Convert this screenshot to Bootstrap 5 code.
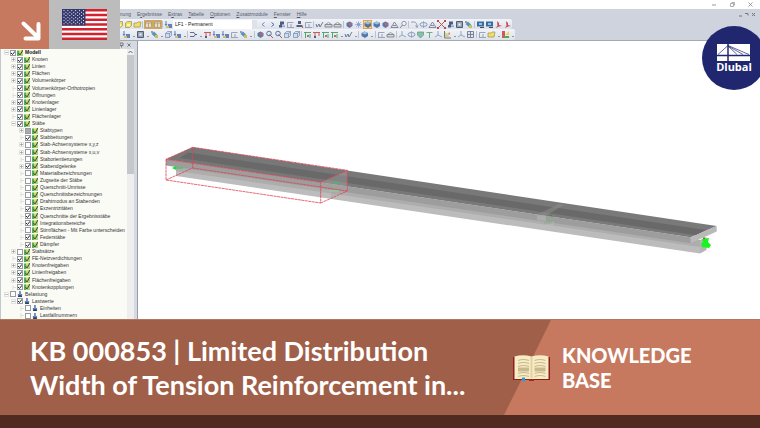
<!DOCTYPE html>
<html lang="en">
<head>
<meta charset="utf-8">
<meta name="viewport" content="width=device-width, initial-scale=1">
<title>KB 000853 | Dlubal Knowledge Base</title>
<link href="https://cdn.jsdelivr.net/npm/bootstrap@5.3.0/dist/css/bootstrap.min.css" rel="stylesheet">
<style>
body { font-family: "Liberation Sans", Arial, sans-serif; background: #fff; }
.app-ui { font-family: "Liberation Sans", Arial, sans-serif; font-size: 5px; line-height: 7px; color: #333; }
.win-bar { height: 9px; gap: 11px; padding-right: 6px; }
.win-btn { width: 7px; height: 7px; line-height: 0; }
.chrome { background: #ced3dd; border-bottom: 1px solid #a6a9ae; }
.menu-line { height: 10px; padding-left: 104px; gap: 6px; }
.menu-line a { color: #555b68; text-decoration: none; }
.tool-line { height: 10px; }
.tools-a { padding-left: 115px; }
.tools-b { padding-left: 122px; height: 11px; }
.tool-strip { background: linear-gradient(#f1f3f8, #dde2eb); border-radius: 0 2px 2px 0; }
.tool { width: 9px; height: 9px; flex: none; line-height: 0; }
.tool svg { width: 9px; height: 9px; opacity: .85; }
.tool.lit { background: #fbd48c; box-shadow: inset 0 0 0 1px #d5a75a; }
.drop { width: 5px; height: 9px; flex: none; line-height: 0; }
.drop::after { content: ""; display: inline-block; border: 1px solid transparent; border-top-color: #444; margin-top: 4px; }
.gap-line { width: 1px; height: 7px; background: #bcc2ce; margin-right: 1px; flex: none; }
.gap-line.wide { margin: 0 1px; }
.case-box { width: 84px; height: 9px; margin-right: 2px; appearance: none; background: #fff linear-gradient(#dde2eb, #dde2eb) right / 5px 100% no-repeat; color: #222; font-size: 5px; line-height: 9px; padding: 0 2px; border: 0; }
.side { width: 137px; flex: none; background: #d5d9e2; }
.side-head { height: 8px; padding-right: 5px; gap: 3px; color: #555; }
.tree { background: #fbfbf6; padding-left: 3px; border-left: 1px solid #c3c7d0; }
.node { min-height: 0; gap: 1px; white-space: nowrap; }
.node label { margin-left: 1px; color: #333; }
.node input { appearance: none; width: 6px; height: 6px; margin: 0; flex: none; border: 1px solid #959ba4; background: #fff; }
.node input:checked { background: #fff url("data:image/svg+xml,%3Csvg xmlns='http://www.w3.org/2000/svg' viewBox='0 0 4 4'%3E%3Cpath d='M0 2L1.5 3.5L4 .3' fill='none' stroke='%23222'/%3E%3C/svg%3E") center / contain no-repeat; }
.node .mixed { background: #aaa; }
.fold { width: 5px; flex: none; line-height: 0; }
.fold svg { width: 5px; height: 5px; display: block; }
.node-icon { width: 6px; height: 6px; flex: none; }
.lvl-1 { padding-left: 7px; }
.lvl-2 { padding-left: 15px; }
.root label { font-weight: 700; color: #111; }
.rail { width: 7px; background: #eeeeef; margin-right: 3px; }
.rail-thumb { background: #c6c7ca; height: 119px; }
.view { border-left: 1px solid #9a9da3; min-width: 0; }
.view svg { width: 100%; height: auto; display: block; }
.corner { z-index: 3; height: 49px; }
.corner-arrow { width: 49px; background: #c6795e; }
.corner-flag { width: 71px; background: #bcbcbc; }
.brand { z-index: 4; top: 26px; right: -6px; width: 64px; height: 64px; background: #20276f; font-family: "Open Sans", sans-serif; font-size: 11px; line-height: 12px; }
.banner { background: #9f5f49; border-top: 1px solid #b27661; height: 96px; }
.banner h1 { font-family: Lato, sans-serif; font-weight: 700; font-size: 27px; line-height: 34px; padding-left: 30px; }
.topic { width: 256px; background: #c6795e; clip-path: polygon(47px 0, 100% 0, 100% 100%, 0 100%); }
.topic-inner h2 { font-family: Lato, sans-serif; font-weight: 900; font-size: 20px; line-height: 25px; }
.topic-inner { padding-left: 9px; gap: 11px; z-index: 2; margin-left: -256px; width: 256px; }
.base-strip { height: 13px; background: #522b20; }
</style>
<script src="https://cdn.jsdelivr.net/npm/bootstrap@5.3.0/dist/js/bootstrap.bundle.min.js"></script>
</head>
<body class="d-flex flex-column vh-100 overflow-hidden position-relative">

<div class="corner d-flex position-absolute top-0 start-0">
  <div class="corner-arrow">
    <svg width="49" height="49" viewBox="0 0 49 49" aria-hidden="true"><path d="M23.500 23.500L37 36.500M38.500 24v14.500H25.500" fill="none" stroke="#fff" stroke-width="4" stroke-linecap="round" stroke-linejoin="round"/></svg>
  </div>
  <div class="corner-flag">
    <svg width="71" height="49" viewBox="49 0 71 49" role="img" aria-label="United States flag">
      <path fill="#fff" d="M62 9h45v31H62z"/>
      <path stroke="#d3222f" stroke-width="2.400" d="M62 10.200h45M62 14.960h45M62 19.720h45M62 24.480h45M62 29.240h45M62 34h45M62 38.760h45"/>
      <path fill="#35386d" d="M62 9h23.500v16.500H62z"/>
      <g id="stars" fill="#fff"></g>
    </svg>
  </div>
</div>

<a href="#" class="brand position-absolute rounded-circle d-flex flex-column align-items-center justify-content-center text-white fw-bold text-decoration-none">
  <svg width="34" height="17" viewBox="0 0 34 17" aria-hidden="true">
    <path fill="#fff" d="M0 0h33v17H0z"/>
    <path stroke="#20276f" fill="none" d="M0 11.500h33" stroke-width="1.500"/>
    <path stroke="#20276f" fill="none" d="M11 0v17" stroke-width="1.500"/>
    <path stroke="#20276f" fill="none" d="M1 10.500L11 1.500L32 10.500M11 2l9 8.500M11 2l15 8.500" stroke-width=".7"/>
  </svg>
  <span>Dlubal</span>
</a>

<main class="app-ui d-flex flex-column flex-fill overflow-hidden">
  <div class="win-bar d-flex justify-content-end align-items-center flex-shrink-0">
    <button class="win-btn btn p-0 border-0" aria-label="Minimize"><svg width="7" height="7"><path d="M1 4h4" stroke="#999"/></svg></button>
    <button class="win-btn btn p-0 border-0" aria-label="Restore"><svg width="7" height="7"><path d="M1.500 2.500h3v3h-3zM2.500 1.500h3v3" stroke="#999" fill="none" stroke-width=".8"/></svg></button>
    <button class="win-btn btn p-0 border-0" aria-label="Close"><svg width="7" height="7"><path d="M1.500 1.500l4 4m0-4l-4 4" stroke="#888" stroke-width=".8"/></svg></button>
  </div>
  <div class="chrome flex-shrink-0">
    <nav class="menu-line d-flex align-items-center">
      <a href="#">Berechnung</a><a href="#">E<u>r</u>gebnisse</a><a href="#">E<u>x</u>tras</a><a href="#"><u>T</u>abelle</a><a href="#"><u>O</u>ptionen</a><a href="#"><u>Z</u>usatzmodule</a><a href="#"><u>F</u>enster</a><a href="#"><u>H</u>ilfe</a>
      <svg class="ms-auto me-1" width="18" height="7" aria-hidden="true"><path d="M1 5h3M7 2.500h3v2M14 2l3 3m0-3l-3 3" stroke="#777" fill="none"/></svg>
    </nav>
    <div class="d-flex"><div class="tool-strip tool-line tools-a d-flex align-items-center" id="toolsA"></div></div>
    <div class="d-flex"><div class="tool-strip tool-line tools-b d-flex align-items-center" id="toolsB"></div></div>
  </div>
  <div class="d-flex flex-fill overflow-hidden">
    <aside class="side d-flex flex-column">
      <div class="side-head d-flex justify-content-end align-items-center flex-shrink-0"><svg width="14" height="6" aria-hidden="true"><path d="M2 1h3v2.500H2zM3.500 3.500v2M9.500 1.500l3 3m0-3l-3 3" fill="none" stroke="#777"/></svg></div>
      <div class="d-flex flex-fill overflow-hidden">
        <ul class="tree list-unstyled d-flex flex-column flex-fill mb-0 overflow-hidden" id="tree"></ul>
        <div class="rail flex-shrink-0">
          <svg class="d-block" width="7" height="6" aria-hidden="true"><path d="M1.500 4L3.500 2l2 2" fill="none" stroke="#666"/></svg>
          <div class="rail-thumb"></div>
        </div>
      </div>
    </aside>
    <section class="view flex-fill bg-white">
      <svg viewBox="138 41 622 278" role="img" aria-label="Structural beam model">
        <defs>
          <linearGradient id="deck" x1="0" y1="0" x2="1" y2="0"><stop offset="0" stop-color="#777"/><stop offset="1" stop-color="#7a7a7a"/></linearGradient>
        </defs>
        <path fill="#bcbcbc" d="M176 166L700 241V253.500L176 176z"/>
        <path fill="#adadad" d="M176 165L700 240V247L176 171z"/>
        <path fill="#b5b5b5" d="M700 240L706.500 237V250L700 253.500z"/>
        <path fill="#9d9d9d" d="M166 159.300L690.700 237.300V243.300L166 165.500z"/>
        <path fill="url(#deck)" d="M192.700 147.300L716.700 226L690.700 237.300L166 159.300z"/>
        <path fill="#696969" d="M188 152.500L706 230L696 235.200L180 158z"/>
        <path fill="#b9b9b9" d="M716.700 226V231.500L690.700 243.300V237.300z"/>
        <path fill="#909090" opacity=".5" d="M537 214.500L559 204L564 205L546 215.500z"/>
        <path fill="#bbb" opacity=".5" d="M537 215l9 1v5l-9-1zM546 224l8-3v5l-8 3z"/>
        <path stroke="#59bd61" stroke-width=".8" opacity=".6" d="M546 216h9M544 223h9"/>
        <path fill="#3f7a45" d="M549 216l2-1 2 1.500z"/>
        <path fill="#a5a5a5" opacity=".45" d="M320.700 182.300L347.300 170.300V191L331 197V188L320.700 189z"/>
        <path fill="none" stroke="#df4453" stroke-width=".8" stroke-dasharray="3 .5" d="M192.700 147.300L166 159.300L320.700 182.300L347.300 170.300zM166 159.300V180L320.700 203V182.300M320.700 203L347.300 191V170.300M166 180L192.700 168V147.300M192.700 168L347.300 191"/>
        <path fill="#20d83a" d="M172 168l4-2v1.500h7v1h-7v1.500zM332 183l4-1.500 3 1.500z"/>
        <path stroke="#8cd88e" d="M329 191h10"/>
        <path fill="#17f51f" d="M702 239l7-1-1 4 3 3-2 3-7-1-1-3 2-2z"/>
        <path fill="#b44" d="M703 237.500h2v1.500h-2z"/>
      </svg>
    </section>
  </div>
</main>

<footer class="flex-shrink-0 text-white">
  <div class="banner d-flex justify-content-between">
    <h1 class="mb-0 align-self-center text-nowrap">KB 000853 | Limited Distribution<br>Width of Tension Reinforcement in...</h1>
    <div class="d-flex">
      <div class="topic"></div>
      <div class="topic-inner d-flex align-items-center">
        <svg width="38" height="28" viewBox="0 0 38 28" aria-hidden="true">
          <path fill="#8e1f1c" d="M0 3h37v23H0z"/><path fill="#a62623" d="M16 25h5v2h-5z"/>
          <path fill="#f8ecc6" d="M1.500 2.500Q10 0 18.500 2.500Q27 0 35.500 2.500V25H1.500z"/>
          <path fill="#e2d2a2" d="M17.500 3h2v21h-2z"/>
          <path stroke="#c9b98d" stroke-width="1.200" fill="none" d="M5 6.500q5.500-2 11 0M5 9.500q5.500-2 11 0M5 12.500q5.500-2 11 0M5 19.500q5.500-2 11 0M5 22.500q5.500-2 11 0M21.500 6.500q5.500-2 11 0M21.500 9.500q5.500-2 11 0M21.500 12.500q5.500-2 11 0M21.500 19.500q5.500-2 11 0M21.500 22.500q5.500-2 11 0"/>
          <path fill="#c9b98d" d="M5 13.500h11v4H5zM21.500 13.500h11v4h-11z"/>
          <path fill="#1f9edb" d="M9 23.500h3v4l-1.500-1-1.500 1z"/>
        </svg>
        <h2 class="mb-0">KNOWLEDGE<br>BASE</h2>
      </div>
    </div>
  </div>
  <div class="base-strip"></div>
</footer>

<script>
const shapes = {
  box: '<path d="M1.500 3l2-1.500h4v4l-2 2h-4z" fill="#f5dc3e" stroke="#8c8532" stroke-width=".7"/><path d="M3 4h3v2H3z" fill="#fff8b0"/>',
  folder: '<path d="M1 3h3l1-1h3l-1 5H1z" fill="#f5dc4e" stroke="#8c8532" stroke-width=".7"/>',
  panel: '<path d="M1.500 1.500h6v6h-6zM1.500 3h6M4.500 3v4" fill="#e7e0cf" stroke="#8b7c62" stroke-width=".7"/>',
  load: '<path d="M2 1v4M1 4l1 1.500L3 4" stroke="#3b64b4" fill="none"/><path d="M4 4h4v4H4z" fill="#4d71ae"/><path d="M2 6h3v2H2z" fill="#d8b748"/>',
  prev: '<path d="M5.500 2.500L3 4.500l2.500 2" fill="none" stroke="#5675c5"/>',
  next: '<path d="M3.500 2.500L6 4.500l-2.500 2" fill="none" stroke="#35509e"/>',
  dark: '<path d="M3 1.500h4v3H5v3H2V5h1z" fill="#30456f"/><path d="M5 5.500h3v1.500H5z" fill="#7d99c9"/>',
  frame: '<path d="M1.500 7.500v-5h6M1 7.500h7M5 4v3" fill="none" stroke="#8590a2" stroke-width=".9"/>',
  person: '<path d="M3 1h3v3H3zM1.500 5h6v2h-6z" fill="#36486e"/><path d="M6 5l2 3" stroke="#b33"/>',
  pen: '<path d="M1 4l1 3 2-3 1 3 3-5" fill="none" stroke="#4c5c73" stroke-width=".9"/>',
  beam: '<path d="M2 4q2.500-3 5 0" stroke="#8a8f99" fill="none"/><path d="M1 4.500h7v2.500H1z" fill="#dad6c4" stroke="#5c6675" stroke-width=".8"/>',
  star: '<circle cx="4.500" cy="4.500" r="1.500" fill="#7f8bcf"/><path d="M4.500 1v7M1 4.500h7M2 2l5 5M7 2L2 7" stroke="#7d89cf" stroke-width=".6"/>',
  cube: '<path d="M1.500 3.500l2-2h4v4l-2 2h-4zM1.500 3.500h4v4m0-4l2-2" fill="#cddcf0" stroke="#6379a0" stroke-width=".7"/>',
  solid: '<path d="M1.500 3l3-1.500L8 3v3L5 8 1.500 6z" fill="#3b639e"/><path d="M1.500 3L5 4.500 8 3 4.500 1.500z" fill="#8bbce0"/>',
  redcube: '<path d="M1.500 3l3-1.500L7.500 3v3l-3 2-3-2z" fill="#41659c"/><path d="M4 3h2.500v2.500H4z" fill="#ca4a4a"/>',
  tri: '<path d="M1 7.500L4.500 2 8 7.500zM3 5.500h3" fill="none" stroke="#6c6e86" stroke-width=".9"/>',
  cross: '<path d="M1 1l7 7M8 1L1 8" stroke="#b33a3a" stroke-width="1"/><path d="M0 0h2v2H0zM7 0h2v2H7zM0 7h2v2H0zM7 7h2v2H7z" fill="#a33"/>',
  search: '<circle cx="4" cy="3.500" r="2.300" fill="#d8e9f8" stroke="#45628e"/><path d="M4.500 4.500L8 8" stroke="#b33"/>',
  lens: '<circle cx="5" cy="3.500" r="2.200" fill="#eef2f8" stroke="#6c7687" stroke-width=".8"/><path d="M3.500 5L1 8" stroke="#6c7687"/>',
  hook: '<path d="M1 2h3q3 0 3 5M5.500 5.500L7 7.500l1-2" fill="none" stroke="#7a8698" stroke-width=".9"/>',
  oval: '<ellipse cx="4.500" cy="4.500" rx="3.500" ry="2" fill="none" stroke="#6d87ad" stroke-width=".9"/><path d="M4.500 1v7" stroke="#7990b1" stroke-width=".7"/>',
  monitor: '<path d="M1 1.500h7v5H1z" fill="#24548e"/><path d="M4 7.500h4" stroke="#333"/><path d="M3 3h3v2H3z" fill="#74c4e9"/>',
  red: '<path d="M3 1l2 2v2l3 1-3 .5L2 8l1.500-2.500z" fill="#c22d35"/>',
  paint: '<path d="M1.500 4L4 1.500l3 3L5 7z" fill="#3c86b7"/><path d="M5 5h3v3H5z" fill="#d2b33e"/><path d="M1 2h2" stroke="#335"/>',
  fork: '<path d="M1 2.500h6L4 5l3 2.500" fill="none" stroke="#69789b" stroke-width=".9"/>',
  window: '<path d="M1.500 1.500h6v6h-6z" fill="#8b98ae" stroke="#38475e"/><path d="M3.500 3.500h2v2h-2z" fill="#f3f5f8"/>',
  result: '<path d="M1 2.500h7M3 2.500V8M7 2.500V6" fill="none" stroke="#c04545" stroke-width="1"/><path d="M2 6h2v2H2z" fill="#446"/>',
  greenr: '<path d="M1 2.500h7M2.500 2.500V8M7 4v4" fill="none" stroke="#379b56" stroke-width="1"/><path d="M4 5h2v2H4z" fill="#b55"/>',
  axis: '<path d="M4 1v4l4 2M4 5L1 7" fill="none" stroke="#7a93b3" stroke-width=".9"/>',
  green: '<path d="M1.500 2h6v3l-3 3-3-3z" fill="#70bf95" stroke="#547b80" stroke-width=".7"/>',
  post: '<path d="M4.500 2v6M1.500 2.500h6" fill="none" stroke="#5f9f75" stroke-width="1"/>',
  grid: '<path d="M1.500 1.500h6v6h-6zM1.500 4.500h6M4.500 1.500v6" fill="#dce3ef" stroke="#59667c" stroke-width=".9"/>',
  palette: '<path d="M1 1h3v7H1z" fill="#d23c3c"/><path d="M1 5l3 3h4V6H4z" fill="#3c9c48"/><path d="M4 5l4-4v4z" fill="#eed13a"/>',
  chart: '<path d="M1.500 1v7H8" stroke="#667" fill="none"/><path d="M2 2l5 5H2z" fill="#c9d064"/><path d="M4 4l3-2v3z" fill="#c98a6a"/>',
  member: '<path d="M1 2.500h4q2.500 2 0 4H1" fill="none" stroke="#354865" stroke-width=".9"/><path d="M6 4.500h2" stroke="#354865"/>'
};
// "-" and "=" are narrow and wide separators, "v" opens a menu, "!" marks a pressed button
const rowA = 'box box folder - !panel !panel - load SELECT prev next dark frame person frame - pen beam beam = redcube star !solid solid redcube tri lens - hook oval tri cross dark window paint = monitor monitor red red';
const rowB = 'load v window v paint v cube load v - member v result load load frame paint v = redcube search search cube cube - greenr result greenr greenr v pen v - solid v = frame beam = axis oval green post axis chart v axis grid = frame folder v palette v';
function fill(id, spec) {
  document.getElementById(id).innerHTML = spec.split(' ').map(s => {
    if (s === '-') return '<span class="gap-line"></span>';
    if (s === '=') return '<span class="gap-line wide"></span>';
    if (s === 'v') return '<button class="drop btn p-0 border-0" aria-label="More"></button>';
    if (s === 'SELECT') return '<select class="case-box" aria-label="Load case"><option>LF1 - Permanent</option></select>';
    const lit = s[0] === '!', k = s.replace('!', '');
    return `<button class="tool btn p-0 border-0 rounded-0${lit ? ' lit' : ''}" aria-label="${k}"><svg viewBox="0 0 9 9">${shapes[k]}</svg></button>`;
  }).join('');
}
fill('toolsA', rowA);
fill('toolsB', rowB);

// level, fold sign, state (1 ticked, 0 empty, 2 mixed), label
const nodes = [
 [0,'-',1,'Modell'],[1,'+',1,'Knoten'],[1,'+',1,'Linien'],[1,'+',1,'Flächen'],[1,'+',1,'Volumenkörper'],
 [1,'',1,'Volumenkörper-Orthotropien'],[1,'',1,'Öffnungen'],[1,'+',1,'Knotenlager'],[1,'+',1,'Linienlager'],
 [1,'',1,'Flächenlager'],[1,'-',1,'Stäbe'],[2,'+',2,'Stabtypen'],[2,'',1,'Stabbettungen'],
 [2,'+',0,'Stab-Achsensysteme x,y,z'],[2,'+',0,'Stab-Achsensysteme x,u,v'],[2,'',0,'Staborientierungen'],
 [2,'+',1,'Stabendgelenke'],[2,'',0,'Materialbezeichnungen'],[2,'',0,'Zugseite der Stäbe'],
 [2,'',0,'Querschnitt-Umrisse'],[2,'',0,'Querschnittsbezeichnungen'],[2,'',0,'Drahtmodus an Stabenden'],
 [2,'',1,'Exzentrizitäten'],[2,'',1,'Querschnitte der Ergebnisstäbe'],[2,'',1,'Integrationsbereiche'],
 [2,'',0,'Stirnflächen - Mit Farbe unterscheiden'],[2,'',1,'Federstäbe'],[2,'',1,'Dämpfer'],
 [1,'+',0,'Stabsätze'],[1,'',1,'FE-Netzverdichtungen'],[1,'+',1,'Knotenfreigaben'],[1,'+',1,'Linienfreigaben'],
 [1,'+',1,'Flächenfreigaben'],[1,'',1,'Knotenkopplungen'],[0,'-',0,'Belastung'],[1,'-',1,'Lastwerte'],
 [2,'',0,'Einheiten'],[2,'',0,'Lastfallnummern']
];
const modelIcon = '<svg class="node-icon" viewBox="0 0 6 6"><path d="M0 0h6v6H0z" fill="#a5d58a"/><path d="M0 1h2v5H0z" fill="#4fae57"/><path d="M1.500 3l1.500 2 3-5" stroke="#5d4a20" fill="none"/><path d="M2 0h2v1.500H2z" fill="#f3e65b"/></svg>';
const loadIcon = '<svg class="node-icon" viewBox="0 0 6 6"><path d="M3 0v5M1 3.500L3 5.500 5 3.500" stroke="#2b4e94" stroke-width="1.200" fill="none"/><path d="M1 5.500h4" stroke="#345"/></svg>';
const sign = { '+': 'M1 2.500h3M2.500 1v3', '-': 'M1 2.500h3' };
document.getElementById('tree').innerHTML = nodes.map(([l, f, c, t], i) => {
  const fold = f ? `<button class="fold btn p-0 border-0" aria-label="Toggle"><svg viewBox="0 0 5 5"><path d="M.5.5h4v4h-4z" fill="#fff" stroke="#ccc" stroke-width=".6"/><path d="${sign[f]}" stroke="#888" stroke-width=".6"/></svg></button>`
    : '<span class="fold"><svg viewBox="0 0 5 5"><path d="M2 0v5M2 2.500h3" stroke="#d2d2d2" stroke-width=".7"/></svg></span>';
  return `<li class="node lvl-${l} d-flex align-items-center flex-fill${i ? '' : ' root'}">${fold}<input type="checkbox" id="n${i}"${c === 1 ? ' checked' : ''}${c === 2 ? ' class="mixed"' : ''}>${i > 33 ? loadIcon : modelIcon}<label for="n${i}">${t}</label></li>`;
}).join('');

let dots = '';
for (let r = 0; r < 9; r++) for (let c = 0; c < (r % 2 ? 5 : 6); c++)
  dots += `<circle cx="${64 + c * 3.9 + (r % 2 ? 1.95 : 0)}" cy="${10.6 + r * 1.65}" r=".55"/>`;
document.getElementById('stars').innerHTML = dots;
</script>
</body>
</html>
